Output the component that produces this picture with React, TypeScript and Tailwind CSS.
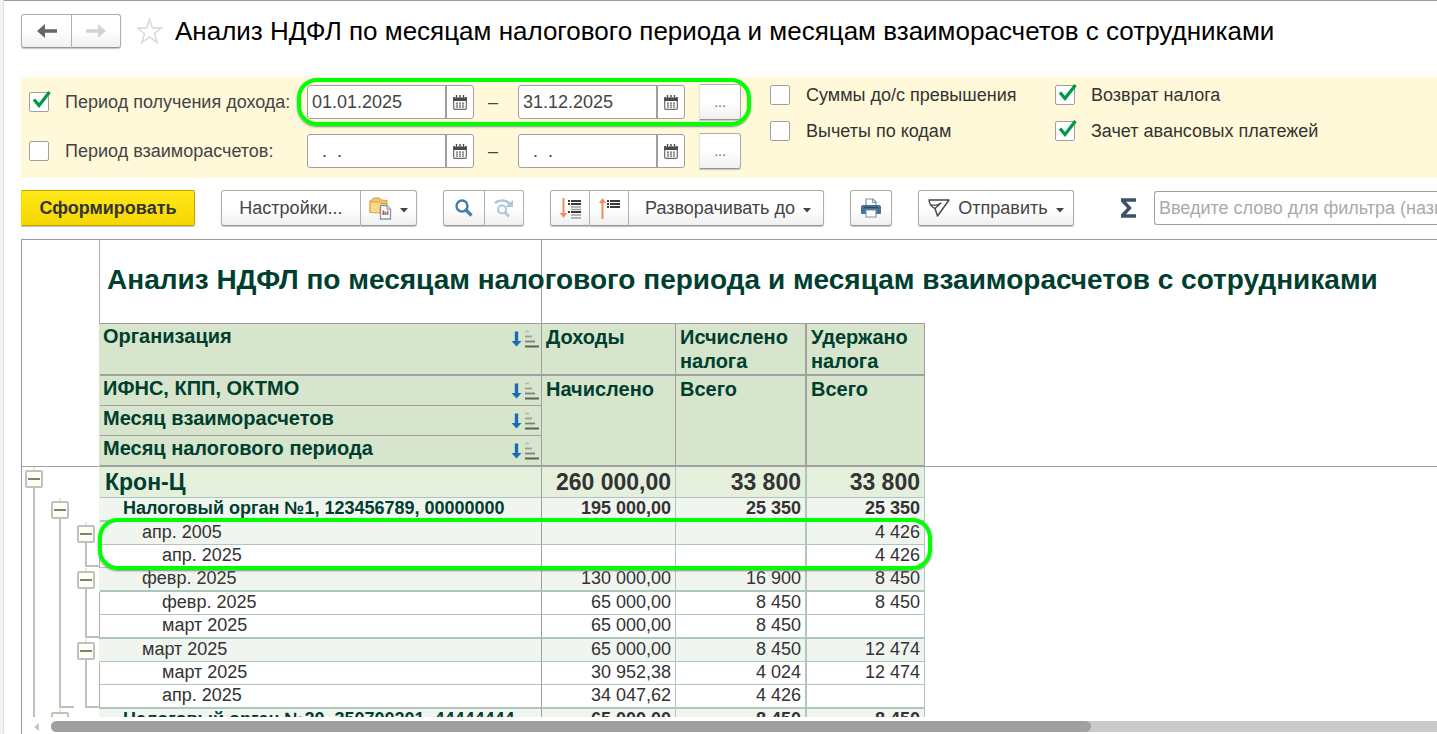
import React from "react";
import clsx from "clsx";

type Lane = "" | "box" | "line" | "end";

type Row = {
  name: string;
  income: string;
  calculated: string;
  withheld: string;
  level: 0 | 1 | 2 | 3;
  lanes: [Lane, Lane, Lane];
  thick?: boolean;
  marked?: boolean;
};

const TITLE =
  "Анализ НДФЛ по месяцам налогового периода и месяцам взаиморасчетов с сотрудниками";

const rows: Row[] = [
  { name: "Крон-Ц", income: "260 000,00", calculated: "33 800", withheld: "33 800", level: 0, lanes: ["box", "", ""] },
  { name: "Налоговый орган №1, 123456789, 00000000", income: "195 000,00", calculated: "25 350", withheld: "25 350", level: 1, lanes: ["line", "box", ""], thick: true },
  { name: "апр. 2005", income: "", calculated: "", withheld: "4 426", level: 2, lanes: ["line", "line", "box"], marked: true },
  { name: "апр. 2025", income: "", calculated: "", withheld: "4 426", level: 3, lanes: ["line", "line", "end"] },
  { name: "февр. 2025", income: "130 000,00", calculated: "16 900", withheld: "8 450", level: 2, lanes: ["line", "line", "box"], thick: true },
  { name: "февр. 2025", income: "65 000,00", calculated: "8 450", withheld: "8 450", level: 3, lanes: ["line", "line", "line"] },
  { name: "март 2025", income: "65 000,00", calculated: "8 450", withheld: "", level: 3, lanes: ["line", "line", "end"], thick: true },
  { name: "март 2025", income: "65 000,00", calculated: "8 450", withheld: "12 474", level: 2, lanes: ["line", "line", "box"] },
  { name: "март 2025", income: "30 952,38", calculated: "4 024", withheld: "12 474", level: 3, lanes: ["line", "line", "line"] },
  { name: "апр. 2025", income: "34 047,62", calculated: "4 426", withheld: "", level: 3, lanes: ["line", "end", "end"], thick: true },
  { name: "Налоговый орган №20, 350700201, 44444444", income: "65 000,00", calculated: "8 450", withheld: "8 450", level: 1, lanes: ["line", "box", ""] },
];

const buttonStyle =
  "flex items-center justify-center border border-[#adadad] border-b-[#959595] bg-linear-to-b from-white from-50% to-[#f0f0f0] shadow-[0_1px_1px_#c4c4c4]";

const Caret = () => (
  <svg width="8" height="5" viewBox="0 0 8 5" className="mt-1 shrink-0">
    <path d="M0 0h8L4 4.5z" fill="#444" />
  </svg>
);

const CalendarIcon = () => (
  <svg width="14" height="15" viewBox="0 0 14 15">
    <path d="M.7 4h12.6v9.3a1 1 0 0 1-1 1H1.7a1 1 0 0 1-1-1z" fill="#fff" stroke="#6a6a6a" strokeWidth="1.2" />
    <path d="M.2 2h13.6v4H.2z" fill="#4a4a4a" />
    <path d="M3.5 0v3M7 0v3M10.5 0v3" stroke="#fff" strokeWidth="2.6" />
    <path d="M3.5 0v3M7 0v3M10.5 0v3" stroke="#4a4a4a" strokeWidth="1.4" />
    <path d="M3 8.2h2m1 0h2m1 0h2M3 10.2h2m1 0h2m1 0h2M3 12.2h2m1 0h2m1 0h2" stroke="#6a6a6a" strokeWidth="1.2" />
  </svg>
);

const FolderIcon = () => (
  <svg width="23" height="23" viewBox="0 0 23 23">
    <path d="M1 15.500V3.500L3 3l1.500-2h6L12 3l6 .5v3" fill="#f0c76f" stroke="#d9a03c" />
    <path d="M1 15.500V5h10l1 1.500h6V10h-7v6z" fill="#f8d98d" stroke="#dca343" />
    <path d="M11.500 8.500H18l3.500 3.500v10h-10z" fill="#fff" stroke="#8496a8" strokeWidth="1.300" />
    <path d="M18 8.500V12h3.500" fill="#dbe6f0" stroke="#8496a8" />
    <path d="M14.500 13.500V18" stroke="#e0483c" strokeWidth="2" />
    <path d="M16.700 15v3" stroke="#3f9c55" strokeWidth="1.600" />
    <path d="M18.700 13.500V18" stroke="#e0584c" strokeWidth="1.400" />
  </svg>
);

const SearchIcon = () => (
  <svg width="18" height="18" viewBox="0 0 18 18" fill="none" stroke="#3e7fae">
    <circle cx="7" cy="7" r="5.500" strokeWidth="2.400" />
    <path d="m11 11 5.500 5.500" strokeWidth="3.200" />
  </svg>
);

const SearchNextIcon = () => (
  <svg width="20" height="19" viewBox="0 0 20 19" fill="none" stroke="#a3c2d8">
    <path d="M1 4C5 .5 12 .5 16 5" strokeWidth="2.600" />
    <path d="M19 1v7h-7.500z" fill="#a3c2d8" stroke="none" />
    <circle cx="8" cy="10.500" r="4" strokeWidth="2" />
    <path d="m11 13.500 4 4" strokeWidth="2.600" />
  </svg>
);

const ExpandIcon = () => (
  <svg width="21" height="21" viewBox="0 0 21 21" fill="none">
    <path d="M3.500 0v17" stroke="#f58a55" strokeWidth="2" />
    <path d="M0 15h7l-3.500 5z" fill="#f58a55" />
    <path d="M8 3h2m1 0h10M8 6h2m1 0h10M8 14h2m1 0h10" stroke="#3a3a3a" strokeWidth="1.800" />
    <path d="M11 9h10M11 11.500h10M11 17h10M11 20h10" stroke="#a0a0a0" strokeWidth="1.500" />
  </svg>
);

const CollapseIcon = () => (
  <svg width="21" height="21" viewBox="0 0 21 21" fill="none">
    <path d="M3.500 3v18" stroke="#f58a55" strokeWidth="2" />
    <path d="M0 5h7L3.500 0z" fill="#f58a55" />
    <path d="M8 3h2m1 0h10M8 6h2m1 0h10M8 9h2m1 0h10" stroke="#3a3a3a" strokeWidth="1.800" />
  </svg>
);

const PrinterIcon = () => (
  <svg width="20" height="20" viewBox="0 0 20 20">
    <path d="M5 8V1h7l3 3v4" fill="#fff" stroke="#7f93a6" strokeWidth="1.200" />
    <path d="M11.500 1v3.500H15" fill="none" stroke="#7f93a6" />
    <path d="M2 7h16a2 2 0 0 1 2 2v6a1 1 0 0 1-1 1H1a1 1 0 0 1-1-1V9a2 2 0 0 1 2-2z" fill="#48709a" />
    <path d="M3 9.500h14" stroke="#2c4d70" strokeWidth="1.400" />
    <path d="M5 12h10v7H5z" fill="#fff" stroke="#7f93a6" strokeWidth="1.200" />
  </svg>
);

const SendIcon = () => (
  <svg width="22" height="18" viewBox="0 0 22 18" fill="none" stroke="#444" strokeWidth="1.400" strokeLinejoin="round">
    <path d="M1 1h20L9.500 17 7 9.500C3.500 8 1.500 5 1 1z" />
    <path d="M2 5.500c4 1.500 8 .5 11-1.500L7 9.500" strokeWidth="1.200" />
  </svg>
);

const SortIcon = () => (
  <svg width="28" height="18" viewBox="0 0 28 18" fill="none">
    <path d="M5.500 1.500v11" stroke="#1a6cb5" strokeWidth="3.400" />
    <path d="M.5 11h10l-5 5.500z" fill="#1a6cb5" />
    <path d="M14 1.500h4" stroke="#b4bcac" strokeWidth="1.600" />
    <path d="M14 6.500h7" stroke="#98a092" strokeWidth="1.800" />
    <path d="M14 11.500h10" stroke="#7b8177" strokeWidth="1.800" />
    <path d="M14 16.500h14" stroke="#5b6058" strokeWidth="2" />
  </svg>
);

const Check = ({ id, label, checked, className }: { id: string; label: string; checked?: boolean; className?: string }) => (
  <div className={clsx("flex items-center", className)}>
    <span className="relative flex size-5 shrink-0">
      <input
        id={id}
        type="checkbox"
        defaultChecked={checked}
        className="peer size-5 appearance-none rounded-[2px] border border-[#a0a0a0] bg-white"
      />
      <svg
        width="20"
        height="20"
        viewBox="0 0 20 20"
        className="pointer-events-none absolute -top-1 left-0.5 hidden peer-checked:block"
      >
        <path d="M3 11.500l5 6L18.500 4" fill="none" stroke="#009846" strokeWidth="3.200" />
      </svg>
    </span>
    <label htmlFor={id} className="pl-4 whitespace-nowrap">{label}</label>
  </div>
);

const DateBox = ({ value, label }: { value: string; label: string }) => (
  <div className="flex h-[34px] w-[167px] overflow-hidden rounded-[3px] border border-[#a0a0a0] bg-white">
    <input
      aria-label={label}
      defaultValue={value}
      className="min-w-0 flex-1 pl-1 whitespace-pre text-[#444] outline-none"
    />
    <button aria-label="Выбрать дату" className="flex w-7 items-center justify-center border-l-2 border-[#a0a0a0]">
      <CalendarIcon />
    </button>
  </div>
);

const DateRange = ({ from, to, label, marked }: { from: string; to: string; label: string; marked?: boolean }) => (
  <div className="relative flex h-9 items-center">
    <DateBox value={from} label={`${label}: начало`} />
    <span className="w-11 pr-1.5 text-center">–</span>
    <DateBox value={to} label={`${label}: конец`} />
    <button className={clsx(buttonStyle, "ml-3.5 h-9 w-[42px] rounded-r-[3px] border-l-[#e4e4e4] text-sm text-[#666]")}>
      ...
    </button>
    {marked && (
      <span className="pointer-events-none absolute -inset-x-2.5 -top-1.5 -bottom-1.5 rounded-[20px] border-4 border-[#00ff00] shadow-[0_1px_2px_#888]" />
    )}
  </div>
);

const LaneCell = ({ kind }: { kind: Lane }) => {
  if (kind === "box") {
    return (
      <span className="flex w-[26px] shrink-0 flex-col items-center pr-0.5">
        <span className="h-[3px] w-0.5 bg-[#e8e8e0]" />
        <button
          aria-label="Свернуть"
          className="flex size-[18px] shrink-0 items-center justify-center rounded-[2px] border-2 border-[#c0c0c0] bg-[#fffff2]"
        >
          <span className="h-0.5 w-3 bg-[#808078]" />
        </button>
        <span className="w-0.5 flex-1 bg-[#c0c0c0]" />
      </span>
    );
  }
  return (
    <span className="flex w-[26px] shrink-0 pl-[11px]">
      {kind === "line" && <span className="w-0.5 bg-[#c0c0c0]" />}
      {kind === "end" && <span className="mb-px flex-1 border-b-2 border-l-2 border-[#c0c0c0]" />}
    </span>
  );
};

const rowHeight = (row: Row) => (row.level === 0 ? "h-[31px]" : row.thick ? "h-6" : "h-[23px]");

const ReportRow = ({ row }: { row: Row }) => {
  const bg = ["bg-[#e4efdc]", "bg-[#f0f5ef]", "bg-[#f0f5ef]", "bg-white"][row.level];
  const indent = ["pl-[5px]", "pl-[23px]", "pl-[42px]", "pl-[62px]"][row.level];
  const font = ["text-[23px] font-bold", "font-bold", "", ""][row.level];
  const cell = clsx(
    bg,
    font,
    "border-[#afc7bb] py-0 pl-0 leading-5",
    row.thick ? "border-b-2" : "border-b",
    row.level !== 0 && "align-top"
  );
  return (
    <tr className={rowHeight(row)}>
      <td
        className={clsx(
          "border-r p-0",
          ["border-r-[#e4efdc]", "border-r-[#f0f5ef]", "border-r-[#f0f5ef]", "border-r-[#b5b09a]"][row.level]
        )}
      >
        <span className={clsx("flex", rowHeight(row))}>
          {row.lanes.map((kind, i) => (
            <LaneCell key={i} kind={kind} />
          ))}
        </span>
      </td>
      <th
        scope="row"
        className={clsx(
          cell,
          "relative border-r border-r-[#a0a0a0] pr-0 text-left",
          row.level < 2 ? "text-[#003f2f]" : "font-normal"
        )}
      >
        <span className={clsx("block whitespace-nowrap", indent)}>{row.name}</span>
        {row.marked && (
          <span className="pointer-events-none absolute -top-1 -left-0.5 z-10 h-[52px] w-[834px] rounded-[20px] border-4 border-[#00ff00] shadow-[0_1px_2px_#888]" />
        )}
      </th>
      <td className={clsx(cell, "border-r pr-1 text-right")}>{row.income}</td>
      <td className={clsx(cell, "border-r-2 pr-1 text-right")}>{row.calculated}</td>
      <td className={clsx(cell, "border-r pr-1 text-right")}>{row.withheld}</td>
      <td />
    </tr>
  );
};

const headCell = "border-[#a0a0a0] bg-[#d7e5cd] text-left align-top leading-6";
const valueHead = "border-b-2 px-1 pt-px pb-0";

const SortHead = ({ children, thick }: { children: string; thick?: boolean }) => (
  <th scope="col" className={clsx(headCell, "border-r py-0 pr-0.5 pl-[3px]", thick ? "border-b-2" : "border-b")}>
    <div className="flex items-start justify-between">
      <span>{children}</span>
      <button aria-label={`Сортировка: ${children}`} className="pt-1.5">
        <SortIcon />
      </button>
    </div>
  </th>
);

const Report = () => (
  <table className="w-full table-fixed border-separate border-spacing-0 text-lg text-[#333]">
    <colgroup>
      <col className="w-[78px]" />
      <col className="w-[442px]" />
      <col className="w-[134px]" />
      <col className="w-[131px]" />
      <col className="w-[118px]" />
      <col />
    </colgroup>
    <thead className="text-xl text-[#003f2f]">
      <tr className="h-[84px]">
        <td className="border-r border-[#b5b09a]" />
        <th className="border-r border-b border-[#a0a0a0] pt-0 pr-0 pb-1 pl-[7px] text-left">
          <h2 className="w-0 text-[28px] leading-8 whitespace-nowrap">{TITLE}</h2>
        </th>
        <td colSpan={3} className="border-b border-[#a0a0a0]" />
        <td />
      </tr>
      <tr className="h-[52px]">
        <td rowSpan={4} className="border-r border-b border-r-[#d7e5cd] border-b-[#a0a0a0]" />
        <SortHead thick>Организация</SortHead>
        <th className={clsx(headCell, valueHead, "border-r")}>Доходы</th>
        <th className={clsx(headCell, valueHead, "border-r-2")}>Исчислено налога</th>
        <th className={clsx(headCell, valueHead, "border-r")}>Удержано налога</th>
        <td rowSpan={4} className="border-b border-[#a0a0a0]" />
      </tr>
      <tr className="h-[30px]">
        <SortHead>ИФНС, КПП, ОКТМО</SortHead>
        <th rowSpan={3} className={clsx(headCell, valueHead, "border-r")}>Начислено</th>
        <th rowSpan={3} className={clsx(headCell, valueHead, "border-r-2")}>Всего</th>
        <th rowSpan={3} className={clsx(headCell, valueHead, "border-r")}>Всего</th>
      </tr>
      <tr className="h-[30px]">
        <SortHead>Месяц взаиморасчетов</SortHead>
      </tr>
      <tr className="h-[31px]">
        <SortHead thick>Месяц налогового периода</SortHead>
      </tr>
    </thead>
    <tbody>
      {rows.map((row, i) => (
        <ReportRow key={i} row={row} />
      ))}
    </tbody>
  </table>
);

const Header = () => (
  <header className="flex h-[76px] shrink-0 items-start pt-3">
    <div className="flex pt-px">
      <button aria-label="Назад" className={clsx(buttonStyle, "h-[34px] w-[51px] rounded-l-[3px]")}>
        <svg width="20" height="14" viewBox="0 0 20 14">
          <path d="M0 7l8-7v5.200h12v3.600H8V14z" fill="#666" />
        </svg>
      </button>
      <button aria-label="Вперед" className={clsx(buttonStyle, "h-[34px] w-[49px] rounded-r-[3px] border-l-0")}>
        <svg width="20" height="14" viewBox="0 0 20 14">
          <path d="M20 7l-8-7v5.200H0v3.600h12V14z" fill="#d2d2d2" />
        </svg>
      </button>
    </div>
    <button aria-label="В избранное" className="ml-4 pt-1">
      <svg width="26" height="27" viewBox="0 0 26 27">
        <path
          d="M12.500 2.500l3 8.500h9l-7 5.500 2.600 9-7.600-5.500-7.600 5.500 2.600-9-7-5.500h9z"
          fill="#fff"
          stroke="#d8d8d8"
          strokeWidth="1.500"
        />
      </svg>
    </button>
    <h1 className="pl-3 text-[26px] leading-9 whitespace-nowrap text-black">{TITLE}</h1>
  </header>
);

const Filters = () => (
  <section className="flex h-[101px] shrink-0 bg-[#fff9d9] text-lg text-[#444]">
    <div className="flex flex-col gap-[13px] pt-[7px] pl-2">
      <div className="flex">
        <Check id="income-period" label="Период получения дохода:" checked className="w-[278px]" />
        <DateRange from="01.01.2025" to="31.12.2025" label="Период получения дохода" marked />
      </div>
      <div className="flex">
        <Check id="settlement-period" label="Период взаиморасчетов:" className="w-[278px]" />
        <DateRange from="  .  ." to="  .  ." label="Период взаиморасчетов" />
      </div>
    </div>
    <div className="grid auto-rows-[36px] grid-cols-[285px_auto] pl-[29px] text-[#333]">
      <Check id="excess" label="Суммы до/с превышения" />
      <Check id="refund" label="Возврат налога" checked />
      <Check id="deductions" label="Вычеты по кодам" />
      <Check id="advance" label="Зачет авансовых платежей" checked />
    </div>
  </section>
);

const Toolbar = () => (
  <div className="flex h-[61px] shrink-0 items-start gap-[26px] overflow-hidden pt-3 text-lg text-[#444]">
    <button className="h-9 w-[174px] shrink-0 rounded-r-[2px] border border-[#c0a500] border-l-[#f5d800] bg-linear-to-b from-[#ffe817] to-[#f5d600] font-bold text-[#333] shadow-[0_1px_1px_#c4c4c4]">
      Сформировать
    </button>
    <div className="flex shrink-0">
      <button className={clsx(buttonStyle, "h-9 w-[140px] rounded-l-[3px]")}>Настройки...</button>
      <button aria-label="Варианты настроек" className={clsx(buttonStyle, "h-9 w-14 gap-2 rounded-r-[3px] border-l-0")}>
        <FolderIcon />
        <Caret />
      </button>
    </div>
    <div className="flex shrink-0">
      <button aria-label="Найти" className={clsx(buttonStyle, "h-9 w-[42px] rounded-l-[3px]")}>
        <SearchIcon />
      </button>
      <button aria-label="Найти далее" className={clsx(buttonStyle, "h-9 w-[39px] rounded-r-[3px] border-l-0 opacity-90")}>
        <SearchNextIcon />
      </button>
    </div>
    <div className="flex shrink-0">
      <button aria-label="Развернуть" className={clsx(buttonStyle, "h-9 w-10 rounded-l-[3px]")}>
        <ExpandIcon />
      </button>
      <button aria-label="Свернуть все" className={clsx(buttonStyle, "h-9 w-[39px] border-l-0")}>
        <CollapseIcon />
      </button>
      <button className={clsx(buttonStyle, "h-9 w-[195px] gap-2 rounded-r-[3px] border-l-0 pl-1")}>
        Разворачивать до
        <Caret />
      </button>
    </div>
    <button aria-label="Печать" className={clsx(buttonStyle, "h-9 w-[42px] shrink-0 rounded-[3px]")}>
      <PrinterIcon />
    </button>
    <button className={clsx(buttonStyle, "h-9 w-[156px] shrink-0 gap-2 rounded-[3px]")}>
      <SendIcon />
      Отправить
      <Caret />
    </button>
    <div className="flex min-w-0 flex-1 items-center pl-5">
      <button aria-label="Сумма" className="flex h-9 w-[34px] shrink-0 items-center">
        <svg width="17" height="20" viewBox="0 0 17 20">
          <path d="M1 2h15M1 18h15M2 2l7.500 8L2 18" fill="none" stroke="#3c5264" strokeWidth="3.400" />
        </svg>
      </button>
      <input
        aria-label="Фильтр"
        placeholder="Введите слово для фильтра (название товара, покупателя и пр.)"
        className="h-[34px] min-w-0 flex-1 rounded-l-[3px] border border-r-0 border-[#a0a0a0] bg-white pl-1 placeholder:text-[#aaa]"
      />
    </div>
  </div>
);

const App = () => {
  return (
    <div className="flex h-screen overflow-hidden bg-[#f4f4f4] font-['Liberation_Sans',Arial,sans-serif]">
      <main className="ml-1 flex min-w-0 flex-1 flex-col border-t border-[#999] bg-white pl-[17px] shadow-[0_0_2px_#bbb]">
        <Header />
        <Filters />
        <Toolbar />
        <div className="flex min-h-0 flex-1 flex-col border-t border-l border-[#999]">
          <div className="min-h-0 flex-1 overflow-hidden">
            <Report />
          </div>
          {/* Horizontal scrollbar */}
          <div className="flex h-[17px] shrink-0 items-center pt-0.5 pl-3">
            <svg width="5" height="8" viewBox="0 0 5 8">
              <path d="M5 0v8L0 4z" fill="#c4c4c4" />
            </svg>
            <div className="ml-3 h-[11px] flex-1 rounded-l-full bg-[#cbcbcb]">
              <div className="h-full w-3/4 rounded-full bg-[#a0a0a0]" />
            </div>
          </div>
        </div>
      </main>
    </div>
  );
};

export default App;
